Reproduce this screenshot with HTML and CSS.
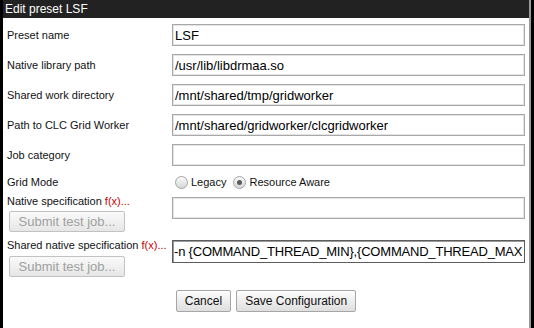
FILE: index.html
```html
<!DOCTYPE html>
<html lang="en">
<head>
    <meta charset="UTF-8">
    <title>Edit preset LSF</title>
    <link rel="stylesheet" href="styles.css">
</head>
<body>

    <div class="dialog">
        <div class="inner">
            <div class="titlebar">Edit preset LSF</div>

            <form class="form">
                <div class="row">
                    <label class="label">Preset name</label>
                    <input class="field" type="text" value="LSF">
                </div>
                <div class="row">
                    <label class="label">Native library path</label>
                    <input class="field" type="text" value="/usr/lib/libdrmaa.so">
                </div>
                <div class="row">
                    <label class="label">Shared work directory</label>
                    <input class="field" type="text" value="/mnt/shared/tmp/gridworker">
                </div>
                <div class="row">
                    <label class="label">Path to CLC Grid Worker</label>
                    <input class="field" type="text" value="/mnt/shared/gridworker/clcgridworker">
                </div>
                <div class="row">
                    <label class="label">Job category</label>
                    <input class="field" type="text" value="">
                </div>

                <!-- radio pair drawn by hand so it looks like the old chrome ones -->
                <div class="row row-mode">
                    <span class="label">Grid Mode</span>
                    <div class="radios">
                        <span class="radio"><span class="dot"></span>Legacy</span>
                        <span class="radio"><span class="dot checked"></span>Resource Aware</span>
                    </div>
                </div>

                <div class="row row-spec">
                    <div class="label-cell">
                        <span class="label">Native specification <span class="fx">f(x)...</span></span>
                        <button class="btn submit" type="button" disabled>Submit test job...</button>
                    </div>
                    <input class="field" type="text" value="">
                </div>

                <div class="row row-spec row-shared">
                    <div class="label-cell">
                        <span class="label">Shared native specification <span class="fx">f(x)...</span></span>
                        <button class="btn submit" type="button" disabled>Submit test job...</button>
                    </div>
                    <input class="field field-dark" type="text" value="-n {COMMAND_THREAD_MIN},{COMMAND_THREAD_MAX}">
                </div>

                <div class="actions">
                    <button class="btn" type="button">Cancel</button>
                    <button class="btn" type="button">Save Configuration</button>
                </div>
            </form>
        </div>
    </div>

</body>
</html>
```

FILE: styles.css
```css
body {
    margin: 0;
    font-family: 'Liberation Sans', Arial, sans-serif;
    background: #ffffff;
    color: #000000;
}

.dialog {
    height: 328px;
    box-sizing: border-box;
    border-left: 3px solid #000000;
    border-right: 3px solid #000000;
    background: #ffffff;
}

.inner {
    height: 100%;
    border-right: 2px solid #9a9a9a;
}

.titlebar {
    height: 18px;
    line-height: 18px;
    padding-left: 2px;
    background-color: #222222;
    color: #ffffff;
    font-size: 12px;
}

.form {
    padding: 6px 4px 0 4px;
}

.row {
    display: grid;
    grid-template-columns: 165px 1fr;
    align-items: center;
    margin-bottom: 8px;
}

.label {
    font-size: 11px;
    color: #111111;
}

.fx {
    color: #cc0000;
}

.field {
    box-sizing: border-box;
    width: 100%;
    height: 22px;
    margin: 0;
    padding: 0 2px;
    font-family: 'Liberation Sans', Arial, sans-serif;
    font-size: 13px;
    color: #000000;
    border: 1px solid #a8a8a8;
    box-shadow: inset 0 0 0 1px #e4e4e4;
    outline: none;
}

.field-dark {
    height: 23px;
    padding-left: 1px;
    letter-spacing: -0.2px;
    border-color: #5c5c5c;
    box-shadow: inset 1px 1px 0 #9a9a9a;
}

.row-mode {
    height: 16px;
    margin-bottom: 4px;
}

.radios {
    display: flex;
    align-items: center;
    font-size: 11px;
    color: #111111;
}

.radio {
    display: flex;
    align-items: center;
    margin-right: 4px;
    margin-left: 3px;
}

.dot {
    width: 11px;
    height: 11px;
    margin-right: 3px;
    border: 1px solid #a4a4a4;
    border-radius: 50%;
    background: linear-gradient(#fafafa, #d6d6d6);
    position: relative;
}

.dot.checked::after {
    content: '';
    position: absolute;
    left: 3px;
    top: 3px;
    width: 5px;
    height: 5px;
    border-radius: 50%;
    background: #5a5a5a;
}

.row-spec {
    align-items: start;
    margin-bottom: 6px;
}

.label-cell {
    display: flex;
    flex-direction: column;
    align-items: flex-start;
}

.label-cell .label {
    line-height: 14px;
}

.row-spec .field {
    margin-top: 3px;
}

.row-shared .field {
    margin-top: 2px;
}

.btn {
    height: 22px;
    padding: 0 8px;
    font-family: 'Liberation Sans', Arial, sans-serif;
    font-size: 12px;
    color: #111111;
    border: 1px solid #a6a6a6;
    border-radius: 2px;
    background: linear-gradient(#fdfdfd, #dedede);
}

.submit {
    height: 21px;
    margin-top: 3px;
    margin-left: 2px;
    width: 116px;
    padding: 0;
    font-size: 13px;
    color: #a0a0a0;
    border-color: #c2c2c2;
    background: linear-gradient(#fafafa, #e6e6e6);
}

.row-shared .submit {
    margin-top: 4px;
}

.actions {
    display: flex;
    justify-content: center;
    gap: 5px;
    margin-top: 13px;
}
```
